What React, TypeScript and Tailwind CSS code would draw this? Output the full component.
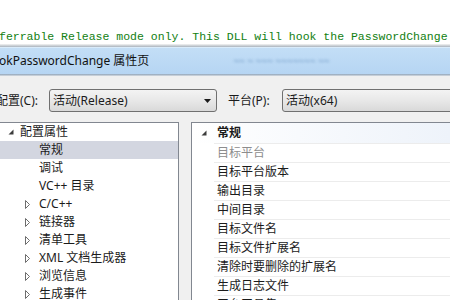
const uiFont = { fontFamily: '"Noto Sans", "Noto Sans CJK SC", sans-serif' };

function Expanded() {
  return (
    <svg width="6" height="6" viewBox="0 0 6 6" className="shrink-0">
      <path d="M5.5 0.5 L5.5 5.5 L0.5 5.5 Z" fill="#3c3c3c" />
    </svg>
  );
}

function Collapsed() {
  return (
    <svg width="5" height="9" viewBox="0 0 5 9" className="shrink-0">
      <path d="M0.5 0.5 L4.5 4.5 L0.5 8.5 Z" fill="none" stroke="#6d6d6d" strokeWidth="1" />
    </svg>
  );
}

function ComboArrow() {
  return (
    <svg width="7" height="4" viewBox="0 0 7 4" className="shrink-0">
      <path d="M0 0 L7 0 L3.5 4 Z" fill="#1a1a1a" />
    </svg>
  );
}

type TreeItem = { label: string; kind: "root" | "leaf" | "branch"; selected?: boolean };

const tree: TreeItem[] = [
  { label: "配置属性", kind: "root" },
  { label: "常规", kind: "leaf", selected: true },
  { label: "调试", kind: "leaf" },
  { label: "VC++ 目录", kind: "leaf" },
  { label: "C/C++", kind: "branch" },
  { label: "链接器", kind: "branch" },
  { label: "清单工具", kind: "branch" },
  { label: "XML 文档生成器", kind: "branch" },
  { label: "浏览信息", kind: "branch" },
  { label: "生成事件", kind: "branch" },
];

const props = [
  { label: "目标平台", disabled: true },
  { label: "目标平台版本" },
  { label: "输出目录" },
  { label: "中间目录" },
  { label: "目标文件名" },
  { label: "目标文件扩展名" },
  { label: "清除时要删除的扩展名" },
  { label: "生成日志文件" },
  { label: "平台工具集" },
];

function TreeRow({ item }: { item: TreeItem }) {
  return (
    <div
      className={`flex h-[18px] shrink-0 items-center whitespace-nowrap text-[12px] text-[#1b1b1b] ${
        item.selected ? "bg-[#d3d6e0]" : ""
      }`}
    >
      {item.kind === "root" && (
        <>
          <span className="ml-[8px] w-[12px]">
            <Expanded />
          </span>
          <span>{item.label}</span>
        </>
      )}
      {item.kind === "branch" && (
        <>
          <span className="ml-[25px] w-[14px]">
            <Collapsed />
          </span>
          <span>{item.label}</span>
        </>
      )}
      {item.kind === "leaf" && <span className="ml-[39px]">{item.label}</span>}
    </div>
  );
}

export default function App() {
  return (
    <div className="flex h-[300px] w-[450px] flex-col overflow-hidden bg-white" style={uiFont}>
      {/* code editor line behind the dialog */}
      <div className="h-[30px] shrink-0" />
      <div
        className="-ml-[1px] h-[14px] shrink-0 whitespace-nowrap text-[11.5px] leading-[14px] text-[#118011]"
        style={{ fontFamily: '"Liberation Mono", monospace' }}
      >
        ferrable Release mode only. This DLL will hook the PasswordChange
      </div>
      <div className="h-[3px] shrink-0 bg-gradient-to-b from-[#f4f4f4] to-[#a9b3bd]" />

      {/* title bar */}
      <div className="flex h-[27px] shrink-0 items-center whitespace-nowrap border-t border-[#d9ebfa] bg-gradient-to-b from-[#c3def6] to-[#b6d5f3] text-[12px] text-[#111]">
        <span className="-ml-[1px]">okPasswordChange 属性页</span>
        <span className="ml-[84px] text-[10px] text-[#4a79ad] opacity-70 blur-[1.5px]">
          ~~ ~ ~~~ ~~~~~~~ ~~
        </span>
      </div>
      <div className="h-[2px] shrink-0 bg-gradient-to-b from-[#8fa3b8] to-[#d8dde2]" />

      {/* dialog body */}
      <div className="flex min-h-0 flex-1 flex-col bg-[#f0f0f0] text-[12px] text-[#1b1b1b]">
        <div className="mt-[13px] flex h-[23px] shrink-0 items-center whitespace-nowrap">
          <span className="-ml-[4px] w-[53px] shrink-0">配置(C):</span>
          <div className="flex h-[23px] w-[168px] shrink-0 items-center justify-between rounded-[3px] border border-[#707070] bg-gradient-to-b from-[#f3f3f3] via-[#e8e8e8] to-[#d9d9d9] pl-[3px] pr-[5px]">
            <span>活动(Release)</span>
            <ComboArrow />
          </div>
          <span className="ml-[11px] w-[54px] shrink-0">平台(P):</span>
          <div className="flex h-[23px] w-[200px] shrink-0 items-center rounded-[3px] border border-[#707070] bg-gradient-to-b from-[#f3f3f3] via-[#e8e8e8] to-[#d9d9d9] pl-[3px]">
            <span>活动(x64)</span>
          </div>
        </div>

        <div className="mt-[10px] flex min-h-0 flex-1 overflow-hidden">
          {/* tree */}
          <div className="w-[179px] shrink-0 border-r border-t border-[#828790] bg-white">
            {tree.map((item) => (
              <TreeRow key={item.label} item={item} />
            ))}
          </div>

          {/* property grid */}
          <div className="ml-[12px] flex-1 border-l border-t border-[#828790] bg-white">
            <div className="flex h-[20px] items-center bg-gradient-to-r from-white to-[#eef3fa] font-bold">
              <span className="ml-[9px] w-[16px]">
                <Expanded />
              </span>
              <span>常规</span>
            </div>
            {props.map((p) => (
              <div key={p.label} className="ml-[22px] flex h-[19px] items-center whitespace-nowrap border-t border-[#ececec]">
                <span className={`ml-[3px] ${p.disabled ? "text-[#8d8d8d]" : ""}`}>{p.label}</span>
              </div>
            ))}
          </div>
        </div>
      </div>
    </div>
  );
}
